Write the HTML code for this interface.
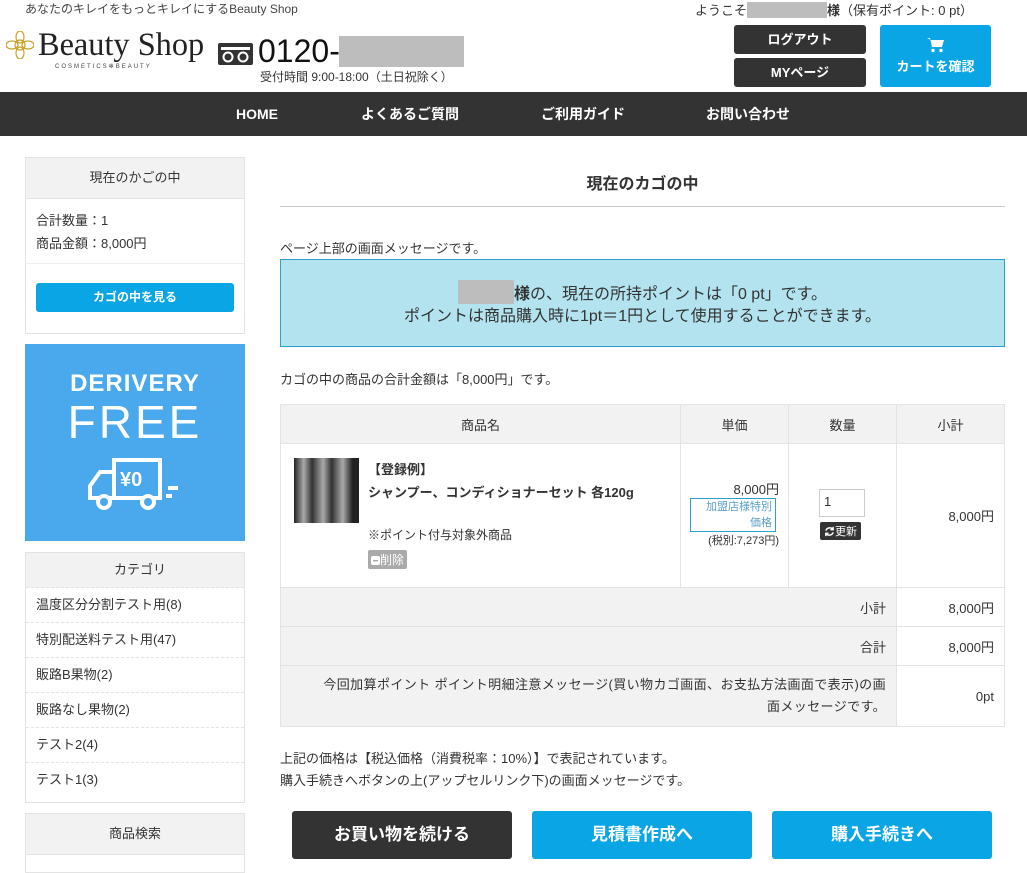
<!DOCTYPE html><html><head><meta charset="utf-8"><style>
*{box-sizing:border-box;margin:0;padding:0}
body{width:1027px;height:868px;overflow:hidden;background:#fff;font-family:"Liberation Sans","Noto Sans CJK JP",sans-serif;color:#333;font-size:13px;position:relative}
.a{position:absolute}
.gray{background:#bdbdbd;display:inline-block}
.btn{position:absolute;color:#fff;text-align:center;font-weight:bold;border-radius:3px}
.box{position:absolute;left:25px;width:220px;border:1px solid #e3e3e3}
.bh{background:#f2f2f2;height:41px;line-height:40px;text-align:center;font-size:13px;border-bottom:1px solid #e3e3e3}
.cat div{height:35px;line-height:34px;padding-left:10px;border-bottom:1px dashed #e3e3e3;font-size:13px}
table{border-collapse:collapse;position:absolute;left:280px;top:404px;width:725px}
td,th{border:1px solid #e3e3e3;font-size:13px;font-weight:normal}
th{background:#f2f2f2;height:39px}
.g td{background:#f2f2f2}
</style></head><body>
<div class="a" style="left:25px;top:0;font-size:12px;color:#444">あなたのキレイをもっとキレイにするBeauty Shop</div>
<div class="a" style="left:695px;top:0;font-size:13px">ようこそ<span class="gray" style="width:80px;height:16px;vertical-align:-3px"></span><b>様</b>（保有ポイント: 0 pt）</div>
<svg class="a" style="left:6px;top:31px" width="28" height="28" viewBox="0 0 28 28" fill="none" stroke="#c9a227" stroke-width="1.2"><circle cx="14" cy="14" r="5"/><ellipse cx="14" cy="6" rx="4" ry="6"/><ellipse cx="14" cy="22" rx="4" ry="6"/><ellipse cx="6" cy="14" rx="6" ry="4"/><ellipse cx="22" cy="14" rx="6" ry="4"/></svg>
<div class="a" style="left:38px;top:27px;font-family:'Liberation Serif',serif;font-size:33px;color:#222;transform:scaleX(0.98);transform-origin:left">Beauty Shop</div>
<div class="a" style="left:55px;top:63px;font-size:6px;letter-spacing:2px;color:#444">COSMETICS✻BEAUTY</div>
<svg class="a" style="left:218px;top:43px" width="35" height="22" viewBox="0 0 35 22"><rect width="35" height="22" rx="2" fill="#333"/><rect x="3" y="4" width="29" height="3" fill="#fff"/><circle cx="10" cy="14" r="4.5" fill="none" stroke="#fff" stroke-width="2"/><circle cx="25" cy="14" r="4.5" fill="none" stroke="#fff" stroke-width="2"/></svg>
<div class="a" style="left:258px;top:33px;font-size:32px;color:#111;line-height:36px">0120-</div>
<div class="a gray" style="left:339px;top:36px;width:125px;height:31px"></div>
<div class="a" style="left:260px;top:68px;font-size:12px">受付時間 9:00-18:00（土日祝除く）</div>
<div class="btn" style="left:734px;top:25px;width:132px;height:29px;line-height:29px;background:#333">ログアウト</div>
<div class="btn" style="left:734px;top:58px;width:132px;height:29px;line-height:29px;background:#333">MYページ</div>
<div class="btn" style="left:880px;top:25px;width:111px;height:62px;background:#0aa5e5;font-size:13px;padding-top:12px"><svg width="18" height="16" viewBox="0 0 18 16"><path d="M0 1h3l2 9h10l2-7H4" fill="#fff"/><circle cx="6" cy="13.5" r="1.7" fill="#fff"/><circle cx="14" cy="13.5" r="1.7" fill="#fff"/></svg><br>カートを確認</div>
<div class="a" style="left:0;top:92px;width:1027px;height:44px;background:#333;color:#fff;font-weight:bold;font-size:14px;line-height:44px">
<span class="a" style="left:236px">HOME</span><span class="a" style="left:361px">よくあるご質問</span><span class="a" style="left:541px">ご利用ガイド</span><span class="a" style="left:706px">お問い合わせ</span></div>
<div class="box" style="top:157px;height:177px"><div class="bh">現在のかごの中</div>
<div style="padding:10px;line-height:23px;border-bottom:1px solid #eee;height:65px">合計数量：1<br>商品金額：8,000円</div>
<div class="btn" style="left:10px;top:125px;width:198px;height:29px;line-height:29px;background:#0aa5e5;font-size:12px">カゴの中を見る</div></div>
<div class="a" style="left:25px;top:344px;width:220px;height:197px;background:#4aa8ec;color:#fff;text-align:center">
<div style="margin-top:26px;font-size:24px;font-weight:bold;letter-spacing:1px">DERIVERY</div>
<div style="font-size:46px;letter-spacing:3px;line-height:48px">FREE</div>
<svg width="110" height="60" viewBox="0 0 110 60" style="margin-top:8px" fill="none" stroke="#fff" stroke-width="4"><path d="M34 6h46v38H34zM34 18H20l-10 14v12h24"/><circle cx="24" cy="48" r="6" fill="#4aa8ec"/><circle cx="68" cy="48" r="6" fill="#4aa8ec"/><path d="M88 34h10M86 42h6" /><text x="40" y="32" fill="#fff" stroke="none" font-size="20" font-weight="bold" font-family="Liberation Sans">¥0</text></svg></div>
<div class="box cat" style="top:552px;height:251px"><div class="bh">カテゴリ</div>
<div>温度区分分割テスト用(8)</div><div>特別配送料テスト用(47)</div><div>販路B果物(2)</div><div>販路なし果物(2)</div><div>テスト2(4)</div><div style="border:none">テスト1(3)</div></div>
<div class="box" style="top:813px;height:60px"><div class="bh">商品検索</div></div>
<div class="a" style="left:280px;top:170px;width:725px;text-align:center;font-weight:bold;font-size:16px">現在のカゴの中</div>
<div class="a" style="left:280px;top:206px;width:725px;border-top:1px solid #ccc"></div>
<div class="a" style="left:280px;top:238px">ページ上部の画面メッセージです。</div>
<div class="a" style="left:280px;top:259px;width:725px;height:88px;background:#b3e3ef;border:1px solid #2aa0d0;text-align:center;font-size:16px;line-height:22px;padding-top:20px"><span class="gray" style="width:56px;height:24px;vertical-align:-5px"></span><b>様</b>の、現在の所持ポイントは「0 pt」です。<br>ポイントは商品購入時に1pt＝1円として使用することができます。</div>
<div class="a" style="left:280px;top:369px">カゴの中の商品の合計金額は「8,000円」です。</div>
<table><tr><th style="width:400px">商品名</th><th style="width:108px">単価</th><th style="width:108px">数量</th><th>小計</th></tr>
<tr style="height:144px"><td style="position:relative;vertical-align:top">
<div class="a" style="left:13px;top:14px;width:65px;height:65px;background:linear-gradient(90deg,#222 0,#aaa 15%,#333 28%,#aaa 45%,#333 58%,#aaa 75%,#222 90%);"></div>
<div class="a" style="left:87px;top:14px;font-weight:bold;line-height:23px">【登録例】<br>シャンプー、コンディショナーセット 各120g</div>
<div class="a" style="left:87px;top:82px;font-size:12px">※ポイント付与対象外商品</div>
<div class="a" style="left:87px;top:106px;background:#aaa;color:#fff;font-size:12px;padding:1px 3px;border-radius:2px"><svg width="9" height="9" viewBox="0 0 9 9" style="vertical-align:-1px"><rect width="9" height="9" rx="2" fill="#fff"/><rect x="2" y="4" width="5" height="1.4" fill="#aaa"/></svg>削除</div></td>
<td style="position:relative;text-align:right;padding-right:9px"><div style="margin-top:-4px">8,000円</div><div style="border:1px solid #2aa0d0;color:#5aa0c8;font-size:11px;width:86px;margin-left:9px;line-height:16px;text-align:right;padding-right:3px">加盟店様特別<br>価格</div><div style="font-size:11px">(税別:7,273円)</div></td>
<td style="position:relative"><div class="a" style="left:30px;top:45px;width:46px;height:28px;border:1px solid #ccc;padding:4px">1</div><div class="a" style="left:31px;top:78px;background:#333;color:#fff;font-size:11px;padding:1px 4px;border-radius:2px"><svg width="11" height="11" viewBox="0 0 12 12" style="vertical-align:-2px" fill="none" stroke="#fff" stroke-width="1.6"><path d="M10 4A4.5 4.5 0 0 0 2 5M2 8a4.5 4.5 0 0 0 8-1"/><path d="M10 1v3H7M2 11V8h3"/></svg>更新</div></td>
<td style="text-align:right;padding-right:10px">8,000円</td></tr>
<tr class="g" style="height:39px"><td colspan="3" style="text-align:right;padding-right:10px">小計</td><td style="background:#fff;text-align:right;padding-right:10px">8,000円</td></tr>
<tr class="g" style="height:39px"><td colspan="3" style="text-align:right;padding-right:10px">合計</td><td style="background:#fff;text-align:right;padding-right:10px">8,000円</td></tr>
<tr class="g" style="height:61px"><td colspan="3" style="text-align:right;padding:0 10px 0 10px;line-height:22px;letter-spacing:0.4px">今回加算ポイント ポイント明細注意メッセージ(買い物カゴ画面、お支払方法画面で表示)の画<br>面メッセージです。</td><td style="background:#fff;text-align:right;padding-right:10px">0pt</td></tr></table>
<div class="a" style="left:280px;top:748px;line-height:22px">上記の価格は【税込価格（消費税率：10%）】で表記されています。<br>購入手続きへボタンの上(アップセルリンク下)の画面メッセージです。</div>
<div class="btn" style="left:292px;top:811px;width:220px;height:48px;line-height:48px;background:#333;font-size:17px">お買い物を続ける</div>
<div class="btn" style="left:532px;top:811px;width:220px;height:48px;line-height:48px;background:#0aa5e5;font-size:17px">見積書作成へ</div>
<div class="btn" style="left:772px;top:811px;width:220px;height:48px;line-height:48px;background:#0aa5e5;font-size:17px">購入手続きへ</div>
</body></html>
